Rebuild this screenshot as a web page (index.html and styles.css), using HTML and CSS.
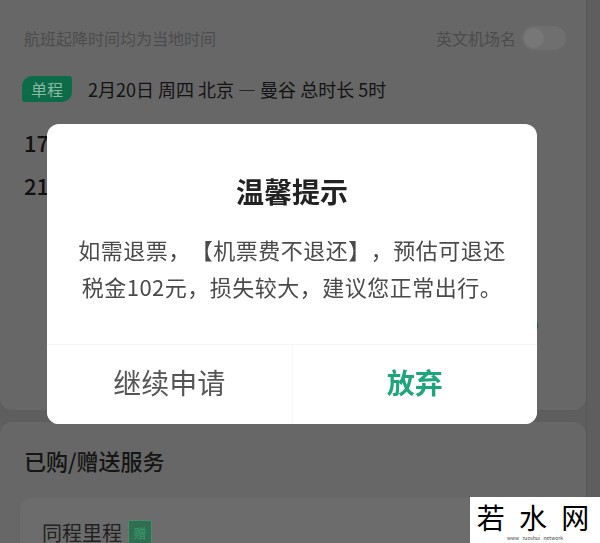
FILE: index.html
```html
<!DOCTYPE html>
<html lang="zh-CN">
<head>
    <meta charset="UTF-8">
    <meta name="viewport" content="width=device-width, initial-scale=1.0">
    <title>退票提示</title>
    <link rel="stylesheet" href="styles.css">
</head>
<body>
    <div class="page">
        <div class="card flight">
            <div class="notice-row">
                <span class="notice">航班起降时间均为当地时间</span>
                <span class="english">英文机场名<span class="toggle"><span class="knob"></span></span></span>
            </div>
            <div class="trip-row">
                <span class="trip-tag">单程</span>
                <span class="trip-info">2月20日 周四 北京 — 曼谷 总时长 5时</span>
            </div>
            <div class="times">
                <div class="time">17</div>
                <div class="time">21</div>
            </div>
            <div class="action-row">
                <span class="action-btn"></span>
            </div>
        </div>

        <div class="card services">
            <h3 class="section-title">已购/赠送服务</h3>
            <div class="service-item">
                <span class="service-name">同程里程</span>
                <span class="gift">赠</span>
            </div>
        </div>
    </div>

    <div class="mask">
        <div class="dialog">
            <div class="dialog-title">温馨提示</div>
            <div class="dialog-body">
                如需退票，【机票费不退还】，预估可退还<br>税金102元，损失较大，建议您正常出行。
            </div>
            <div class="dialog-actions">
                <button class="dialog-btn">继续申请</button>
                <button class="dialog-btn primary">放弃</button>
            </div>
        </div>
    </div>

    <div class="watermark">
        <div class="wm-text">若 水 网</div>
        <div class="wm-sub">www&nbsp;&nbsp;&nbsp;ruoshui&nbsp;&nbsp;&nbsp;network</div>
    </div>
</body>
</html>
```

FILE: styles.css
```css
body {
    margin: 0;
    background: #5e5e5e;
    font-family: "Noto Sans CJK SC", "Noto Sans", sans-serif;
    height: 543px;
    overflow: hidden;
}

.page {
    width: 586px;
    border-right: 1px solid #575757;
}

.card {
    background: #676767;
}

.flight {
    height: 410px;
    border-radius: 0 0 12px 12px;
    padding: 0 0 0 24px;
    box-sizing: border-box;
}

.notice-row {
    display: flex;
    justify-content: space-between;
    align-items: center;
    padding: 24px 20px 0 0;
    height: 28px;
}

.notice {
    font-size: 16px;
    color: #4c4c4c;
}

.english {
    display: flex;
    align-items: center;
    font-size: 16px;
    color: #4c4c4c;
}

.toggle {
    width: 44px;
    height: 24px;
    margin-left: 6px;
    border-radius: 12px;
    background: #6f6f6f;
    display: flex;
    align-items: center;
    padding: 0 2px;
    box-sizing: border-box;
}

.knob {
    width: 20px;
    height: 20px;
    border-radius: 50%;
    background: #777;
}

.trip-row {
    display: flex;
    align-items: center;
    margin: 24px 0 0 -2px;
}

.trip-tag {
    width: 50px;
    height: 26px;
    line-height: 26px;
    text-align: center;
    font-size: 16px;
    color: #8bb9a4;
    background: #0c6b48;
    border-radius: 10px 3px 10px 3px;
    margin-right: 16px;
}

.trip-info {
    font-size: 18px;
    color: #131313;
}

.times {
    margin-top: 19px;
}

.time {
    font-size: 22px;
    font-weight: 500;
    color: #111;
    height: 43px;
    line-height: 43px;
}

.action-row {
    display: flex;
    justify-content: flex-end;
    margin: 110px 48px 0 0;
}

.action-btn {
    width: 110px;
    height: 18px;
    border-radius: 9px;
    background: #0d5c3e;
}

.services {
    margin-top: 12px;
    height: 200px;
    border-radius: 12px 12px 0 0;
    padding: 0 24px;
}

.section-title {
    margin: 0;
    padding-top: 22px;
    font-size: 22px;
    font-weight: 500;
    color: #151515;
    line-height: 32px;
}

.service-item {
    display: flex;
    align-items: center;
    margin: 22px 0 0 -4px;
    padding: 20px 22px;
    background: #6c6c6c;
    border-radius: 10px;
}

.service-name {
    font-size: 20px;
    color: #222;
}

.gift {
    margin-left: 6px;
    width: 22px;
    height: 24px;
    line-height: 24px;
    text-align: center;
    font-size: 13px;
    color: #3a9a6a;
    background: #2f6e52;
    border: 1px solid #4d8a6c;
    border-radius: 2px;
}

.mask {
    position: fixed;
    inset: 0;
    padding: 124px 0 0 47px;
}

.dialog {
    width: 490px;
    height: 300px;
    background: #fff;
    border-radius: 12px;
    display: flex;
    flex-direction: column;
    overflow: hidden;
}

.dialog-title {
    padding-top: 48px;
    text-align: center;
    font-size: 28px;
    font-weight: bold;
    line-height: 38px;
    color: #222;
}

.dialog-body {
    margin-top: 21px;
    text-align: center;
    font-size: 22px;
    line-height: 37px;
    color: #4a4a4a;
    text-spacing-trim: space-all;
    letter-spacing: 0.5px;
}

.dialog-actions {
    margin-top: auto;
    display: flex;
    height: 79px;
    border-top: 1px solid #f5f5f5;
}

.dialog-btn {
    flex: 1;
    border: none;
    background: #fff;
    font-family: inherit;
    font-size: 28px;
    color: #555;
    cursor: pointer;
    padding: 0 0 6px;
}

.dialog-btn + .dialog-btn {
    border-left: 1px solid #f8f8f8;
}

.dialog-btn.primary {
    color: #1fa57b;
    font-weight: bold;
}

.watermark {
    position: absolute;
    left: 470px;
    top: 497px;
    width: 130px;
    height: 46px;
    background: #fff;
    text-align: center;
}

.wm-text {
    padding-top: 2px;
    font-size: 28px;
    line-height: 36px;
    color: #000;
    letter-spacing: 4px;
}

.wm-sub {
    font-size: 5px;
    color: #444;
    line-height: 6px;
}
```
